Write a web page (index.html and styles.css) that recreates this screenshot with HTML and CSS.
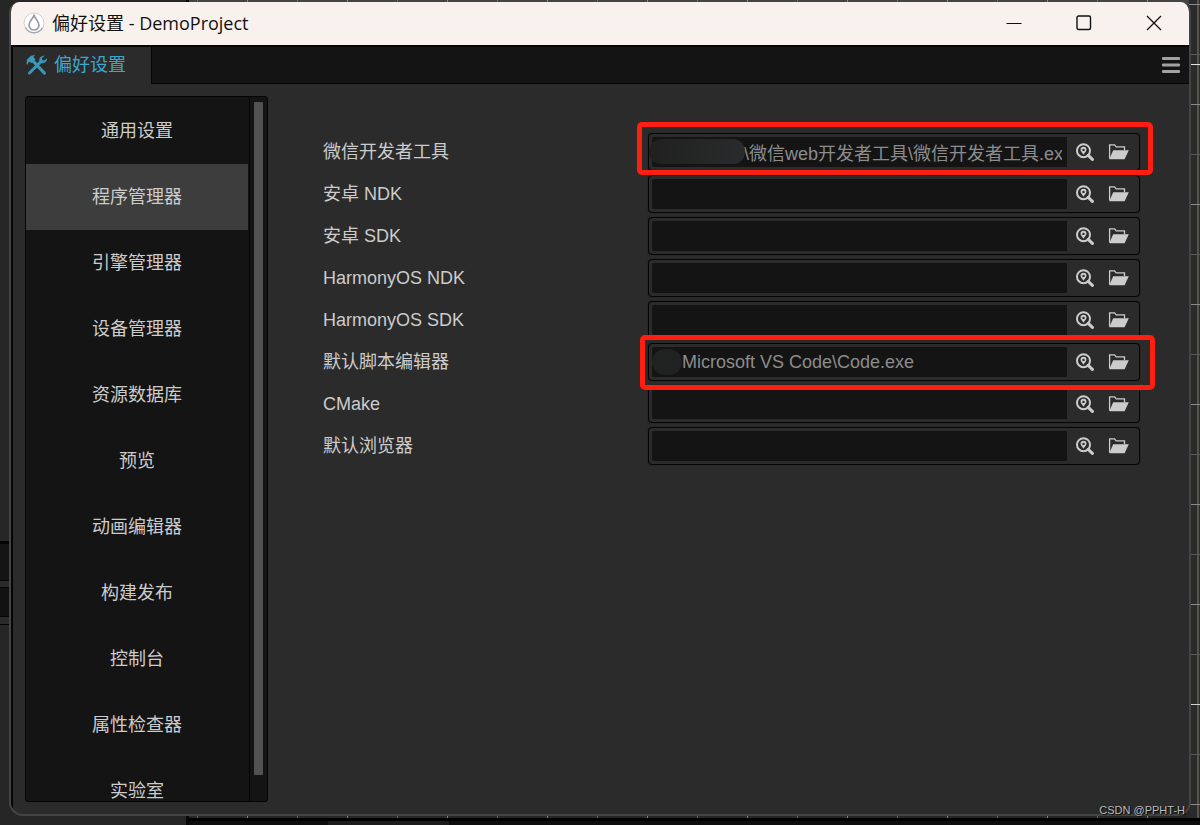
FILE: index.html
```html
<!DOCTYPE html>
<html lang="zh-CN">
<head>
<meta charset="utf-8">
<title>偏好设置 - DemoProject</title>
<link rel="stylesheet" href="styles.css">
</head>
<body>
<svg class="backdrop" viewBox="0 0 1200 825" preserveAspectRatio="none" aria-hidden="true">
  <defs>
    <pattern id="ticks" x="197" y="0" width="100" height="825" patternUnits="userSpaceOnUse">
      <rect width="1" height="825" fill="#6a6a6a"/>
      <rect x="50" width="1" height="825" fill="#8a8a8a"/>
    </pattern>
    <pattern id="rules" x="0" y="4" width="1200" height="100" patternUnits="userSpaceOnUse">
      <rect width="1200" height="1" fill="#8a8a8a"/>
      <rect y="50" width="1200" height="1" fill="#5a5a5a"/>
    </pattern>
  </defs>
  <rect width="1200" height="825" fill="#262626"/>
  <rect x="0" y="541" width="187" height="84" fill="#050505"/>
  <rect x="0" y="544" width="187" height="36" fill="#141414"/>
  <rect x="0" y="581" width="187" height="6" fill="#2b2b2b"/>
  <rect x="0" y="588" width="187" height="28" fill="#121212"/>
  <rect x="0" y="617" width="187" height="7" fill="#2b2b2b"/>
  <rect x="189" y="0" width="1011" height="6" fill="#444"/>
  <rect x="189" y="0" width="1011" height="818" fill="url(#ticks)"/>
  <rect x="1189" y="0" width="11" height="825" fill="#2a2a2a"/>
  <rect x="1197" y="0" width="2" height="825" fill="#57534f"/>
  <rect x="1189" y="0" width="11" height="825" fill="url(#rules)"/>
  <rect x="1191" y="64" width="9" height="1" fill="#e4e4e4"/>
  <rect x="1191" y="704" width="9" height="1" fill="#d0d0d0"/>
  <rect x="186" y="0" width="3" height="825" fill="#080808"/>
  <rect x="189" y="818" width="1011" height="7" fill="#0d0d0d"/>
  <rect x="189" y="818" width="1011" height="3" fill="#000"/>
  <rect x="328" y="821" width="121" height="4" fill="#1c1c1c"/>
</svg>

<svg class="sprites" aria-hidden="true">
  <symbol id="locate" viewBox="0 0 20 20">
    <circle cx="9.500" cy="8.700" r="6.500" fill="none" stroke="#ccc" stroke-width="2"/>
    <path d="M14.200 13.400l4.200 4" stroke="#ccc" stroke-width="3" stroke-linecap="round"/>
    <path fill="#ccc" fill-rule="evenodd" d="M9.500 4.800a3 3 0 0 0-3 3c0 1.600 1.700 2.600 3 5 1.300-2.400 3-3.400 3-5a3 3 0 0 0-3-3zm0 1.900a1.200 1.200 0 1 1 0 2.400 1.200 1.200 0 0 1 0-2.400z"/>
  </symbol>
  <symbol id="folder" viewBox="0 0 22 16">
    <path d="M2.600 14.500V.8h5l1.600 2h8.300v3.400" fill="none" stroke="#ccc" stroke-width="1.300"/>
    <path d="M6.200 6.200h15.600L17.600 15.200H2.300z" fill="#ccc"/>
  </symbol>
</svg>

<div class="window">
  <header class="titlebar">
    <svg class="logo" width="22" height="22" viewBox="0 0 22 22" aria-hidden="true">
      <circle cx="11" cy="11" r="10" fill="#fff" stroke="#d4d2d4" stroke-width="1"/>
      <path d="M2.500 15.500a9.500 9.500 0 0 0 17 0" fill="none" stroke="#a4a8b0" stroke-width="1.400"/>
      <path d="M11 3.500C9 7.500 6 9.700 6 13a5 5 0 0 0 10 0C16 9.700 13 7.500 11 3.500z" fill="#fff" stroke="#9a9fa7" stroke-width="1.700"/>
    </svg>
    <h1 class="title">偏好设置 - DemoProject</h1>
    <button class="control" type="button" aria-label="最小化"><svg width="16" height="16" viewBox="0 0 16 16"><path d="M.5 8.500h15" stroke="#111" stroke-width="1"/></svg></button>
    <button class="control" type="button" aria-label="最大化"><svg width="16" height="16" viewBox="0 0 16 16"><rect x="1" y="1" width="13.500" height="13.500" rx="1.500" fill="none" stroke="#111" stroke-width="1.400"/></svg></button>
    <button class="control" type="button" aria-label="关闭"><svg width="16" height="16" viewBox="0 0 16 16"><path d="M1 1l14 14M15 1L1 15" stroke="#111" stroke-width="1.300"/></svg></button>
  </header>

  <div class="workspace">
    <div class="tabbar">
      <button class="tab" type="button">
        <svg width="22" height="22" viewBox="0 0 22 22" aria-hidden="true">
          <path d="M7.800 7.800l10.500 11.200" stroke="#3a97b8" stroke-width="3.200" stroke-linecap="round"/>
          <path d="M.5 9.500L1 5.500 4.500 2 9 .8 7.500 3l2 2.500L5.800 9.300 4.300 8 2.300 8.300 1.800 11z" fill="#3a97b8"/>
          <path d="M3.500 19L15 7.500" stroke="#3a97b8" stroke-width="3" stroke-linecap="round"/>
          <path d="M18.800 1.800a4.800 4.800 0 0 0-5.600 6.200 4.800 4.800 0 0 0 7.900-3.800l-2.800 2.300-2-.6-.4-2z" fill="#3a97b8"/>
        </svg>
        <span>偏好设置</span>
      </button>
      <div class="tabfill">
        <button class="menu" type="button" aria-label="菜单"><svg width="18" height="16" viewBox="0 0 18 16"><path d="M1 1.500h16M1 8h16M1 14.500h16" stroke="#a2a2a2" stroke-width="2.800" stroke-linecap="round"/></svg></button>
      </div>
    </div>

    <div class="content">
      <div class="sidebar">
        <nav class="nav">
          <button class="item" type="button">通用设置</button>
          <button class="item selected" type="button">程序管理器</button>
          <button class="item" type="button">引擎管理器</button>
          <button class="item" type="button">设备管理器</button>
          <button class="item" type="button">资源数据库</button>
          <button class="item" type="button">预览</button>
          <button class="item" type="button">动画编辑器</button>
          <button class="item" type="button">构建发布</button>
          <button class="item" type="button">控制台</button>
          <button class="item" type="button">属性检查器</button>
          <button class="item" type="button">实验室</button>
        </nav>
        <div class="track"><div class="thumb"></div></div>
      </div>

      <main class="settings">
        <div class="row">
          <label for="wechat">微信开发者工具</label>
          <div class="field marked-first">
            <input class="wechat" id="wechat" type="text" value="\微信web开发者工具\微信开发者工具.exe">
            <button type="button" aria-label="查看"><svg width="20" height="20"><use href="#locate"/></svg></button>
            <button type="button" aria-label="选择"><svg width="22" height="16"><use href="#folder"/></svg></button>
            <span class="smudge wide"></span>
          </div>
        </div>
        <div class="row">
          <label for="andk">安卓 NDK</label>
          <div class="field">
            <input id="andk" type="text">
            <button type="button" aria-label="查看"><svg width="20" height="20"><use href="#locate"/></svg></button>
            <button type="button" aria-label="选择"><svg width="22" height="16"><use href="#folder"/></svg></button>
          </div>
        </div>
        <div class="row">
          <label for="asdk">安卓 SDK</label>
          <div class="field">
            <input id="asdk" type="text">
            <button type="button" aria-label="查看"><svg width="20" height="20"><use href="#locate"/></svg></button>
            <button type="button" aria-label="选择"><svg width="22" height="16"><use href="#folder"/></svg></button>
          </div>
        </div>
        <div class="row">
          <label for="hndk">HarmonyOS NDK</label>
          <div class="field">
            <input id="hndk" type="text">
            <button type="button" aria-label="查看"><svg width="20" height="20"><use href="#locate"/></svg></button>
            <button type="button" aria-label="选择"><svg width="22" height="16"><use href="#folder"/></svg></button>
          </div>
        </div>
        <div class="row">
          <label for="hsdk">HarmonyOS SDK</label>
          <div class="field">
            <input id="hsdk" type="text">
            <button type="button" aria-label="查看"><svg width="20" height="20"><use href="#locate"/></svg></button>
            <button type="button" aria-label="选择"><svg width="22" height="16"><use href="#folder"/></svg></button>
          </div>
        </div>
        <div class="row">
          <label for="editor">默认脚本编辑器</label>
          <div class="field marked-second">
            <input class="editor" id="editor" type="text" value="Microsoft VS Code\Code.exe">
            <button type="button" aria-label="查看"><svg width="20" height="20"><use href="#locate"/></svg></button>
            <button type="button" aria-label="选择"><svg width="22" height="16"><use href="#folder"/></svg></button>
            <span class="smudge small"></span>
          </div>
        </div>
        <div class="row">
          <label for="cmake">CMake</label>
          <div class="field">
            <input id="cmake" type="text">
            <button type="button" aria-label="查看"><svg width="20" height="20"><use href="#locate"/></svg></button>
            <button type="button" aria-label="选择"><svg width="22" height="16"><use href="#folder"/></svg></button>
          </div>
        </div>
        <div class="row">
          <label for="browser">默认浏览器</label>
          <div class="field">
            <input id="browser" type="text">
            <button type="button" aria-label="查看"><svg width="20" height="20"><use href="#locate"/></svg></button>
            <button type="button" aria-label="选择"><svg width="22" height="16"><use href="#folder"/></svg></button>
          </div>
        </div>
      </main>
    </div>
  </div>
</div>
<div class="watermark">CSDN @PPHT-H</div>
</body>
</html>
```
FILE: styles.css
```css
* {
  box-sizing: border-box;
}

body {
  margin: 0;
  height: 100vh;
  padding: 2px 9px 9px;
  position: relative;
  overflow: hidden;
  background: #262626;
  color: #ccc;
  font: 18px/24px "Liberation Sans", "Noto Sans CJK SC", sans-serif;
}

button {
  padding: 0;
  border: 0;
  background: none;
  color: inherit;
  font: inherit;
  display: flex;
  align-items: center;
  justify-content: center;
}

.backdrop {
  position: absolute;
  inset: 0;
  width: 100%;
  height: 100%;
}

.sprites {
  position: absolute;
  width: 0;
  height: 0;
}

.window {
  position: relative;
  height: 100%;
  display: flex;
  flex-direction: column;
  overflow: hidden;
  border: 2px solid #444;
  border-top: 0;
  border-radius: 10px 10px 14px 14px;
  background: #2b2b2b;
}

.titlebar {
  flex: none;
  height: 43px;
  display: flex;
  align-items: center;
  padding: 0 0 2px 12px;
  background: #f9f1ee;
  color: #111;
}

.title {
  flex: 1;
  margin: 0 0 0 7px;
  font: 18px/24px "Open Sans", "Noto Sans CJK SC", sans-serif;
}

.control {
  width: 70px;
  height: 100%;
}

.workspace {
  flex: 1;
  min-height: 0;
  display: flex;
  flex-direction: column;
  border-top: 2px solid #050505;
  border-left: 2px solid #050505;
}

.tabbar {
  flex: none;
  height: 37px;
  display: flex;
}

.tab {
  gap: 6px;
  padding: 0 25px 1px 13px;
  color: #3ba7cf;
}

.tabfill {
  flex: 1;
  display: flex;
  justify-content: flex-end;
  padding-right: 9px;
  border-left: 1px solid #050505;
  border-bottom: 1px solid #050505;
  background: #141414;
}

.content {
  flex: 1;
  min-height: 0;
  display: flex;
  padding: 12px;
}

.sidebar {
  flex: none;
  width: 243px;
  display: flex;
  overflow: hidden;
  border: 1px solid #050505;
  border-radius: 3px;
  background: #141414;
}

.nav {
  flex: 1;
  padding: 1px 1px 0 0;
  border-right: 1px solid #050505;
}

.item {
  width: 100%;
  height: 66px;
}

.selected {
  background: #3d3d3d;
}

.track {
  width: 17px;
  padding: 5px 4px;
}

.thumb {
  width: 9px;
  height: 97%;
  border-radius: 1px;
  background: #525252;
}

.settings {
  flex: 1;
  min-width: 0;
  display: flex;
  flex-direction: column;
  gap: 4px;
  padding: 37px 37px 0 55px;
}

.row {
  display: grid;
  grid-template-columns: minmax(0, 325fr) minmax(0, 492fr);
  align-items: center;
}

.field {
  position: relative;
  height: 38px;
  display: grid;
  grid-template-columns: minmax(0, 1fr) 34px 34px;
  padding: 3px 4px 3px 3px;
  border: 1px solid #050505;
  border-radius: 4px;
  background: #2b2b2b;
  box-shadow: 0 0 1px #111;
}

.field input {
  width: 100%;
  height: 30px;
  padding: 0 5px;
  border: 0;
  border-radius: 2px 0 0 2px;
  background: #141414;
  color: #8c8c8c;
  font: inherit;
}

.field .wechat {
  padding-left: 92px;
}

.field .editor {
  padding-left: 30px;
}

.marked-first::after,
.marked-second::after {
  content: "";
  position: absolute;
  z-index: 1;
  border: 5px solid #ff1f10;
  border-radius: 5px;
  pointer-events: none;
}

.marked-first::after {
  inset: -12px -14px -5px -12px;
}

.marked-second::after {
  inset: -9px -16px -10px -9px;
}

.smudge {
  position: absolute;
  background: linear-gradient(90deg, #202020, #2a2b2c);
}

.wide {
  left: 0;
  top: 5px;
  width: 96px;
  height: 25px;
  border-radius: 12px;
}

.small {
  left: 3px;
  top: 5px;
  width: 30px;
  height: 26px;
  border-radius: 13px;
  background: #202121;
}

.watermark {
  position: absolute;
  right: 15px;
  bottom: 7px;
  color: #bbb;
  font-size: 11px;
  line-height: 16px;
  text-shadow: 1px 1px 1px #000;
}
```
